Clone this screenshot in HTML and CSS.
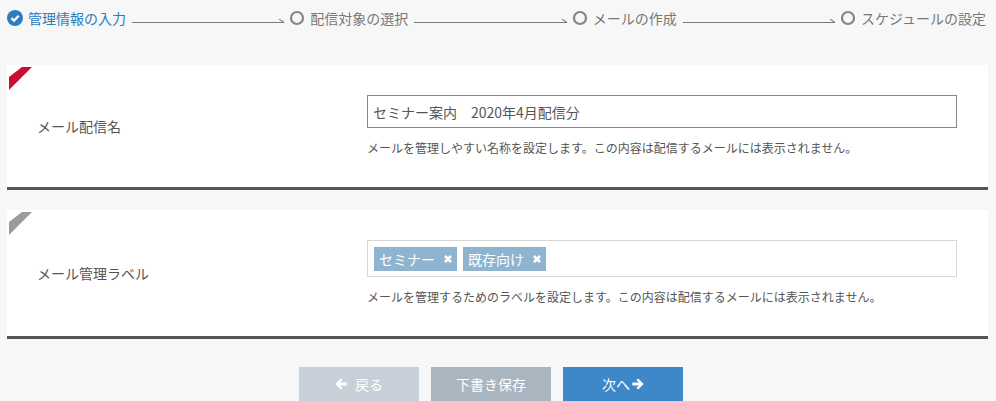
FILE: index.html
```html
<!DOCTYPE html>
<html lang="ja">
<head>
  <meta charset="UTF-8">
  <meta name="viewport" content="width=device-width, initial-scale=1.0">
  <title>メール配信 - 管理情報の入力</title>
  <link rel="stylesheet" href="styles.css">
</head>
<body>
  <div class="steps">
    <div class="step active">
      <svg class="step-icon" viewBox="0 0 16 16"><circle cx="8" cy="8" r="8" fill="#2f7bbf"/><path d="M4.4 8.2 L7 10.7 L11.7 5.7" fill="none" stroke="#fff" stroke-width="2.3"/></svg>
      <span>管理情報の入力</span>
    </div>
    <div class="step-line"></div>
    <div class="step">
      <svg class="step-icon" viewBox="0 0 16 16"><circle cx="8" cy="8" r="6" fill="none" stroke="#858585" stroke-width="2.2"/></svg>
      <span>配信対象の選択</span>
    </div>
    <div class="step-line"></div>
    <div class="step">
      <svg class="step-icon" viewBox="0 0 16 16"><circle cx="8" cy="8" r="6" fill="none" stroke="#858585" stroke-width="2.2"/></svg>
      <span>メールの作成</span>
    </div>
    <div class="step-line"></div>
    <div class="step">
      <svg class="step-icon" viewBox="0 0 16 16"><circle cx="8" cy="8" r="6" fill="none" stroke="#858585" stroke-width="2.2"/></svg>
      <span>スケジュールの設定</span>
    </div>
  </div>

  <div class="card">
    <svg class="ribbon" viewBox="0 0 28 28"><polygon points="15,2 25,2 2,25 2,12" fill="#c8102e"/></svg>
    <div class="card-label">メール配信名</div>
    <div class="card-body">
      <input class="text-input" type="text" value="セミナー案内　2020年4月配信分">
      <p class="help">メールを管理しやすい名称を設定します。この内容は配信するメールには表示されません。</p>
    </div>
  </div>

  <div class="card">
    <svg class="ribbon" viewBox="0 0 28 28"><polygon points="15,2 25,2 2,25 2,12" fill="#9b9b9b"/></svg>
    <div class="card-label">メール管理ラベル</div>
    <div class="card-body">
      <div class="tag-box">
        <span class="tag">セミナー<svg class="tag-close" viewBox="0 0 8 8"><path d="M1 1 L7 7 M7 1 L1 7" stroke="#fff" stroke-width="2.6"/></svg></span>
        <span class="tag">既存向け<svg class="tag-close" viewBox="0 0 8 8"><path d="M1 1 L7 7 M7 1 L1 7" stroke="#fff" stroke-width="2.6"/></svg></span>
      </div>
      <p class="help">メールを管理するためのラベルを設定します。この内容は配信するメールには表示されません。</p>
    </div>
  </div>

  <div class="actions">
    <button class="btn btn-back">
      <svg class="btn-icon" viewBox="0 0 12 12"><path d="M5.8 0.4 L0.3 6 L5.8 11.6 L7.6 9.8 L5.1 7.4 H11.7 V4.6 H5.1 L7.6 2.2 Z" fill="#fff"/></svg>
      <span>戻る</span>
    </button>
    <button class="btn btn-draft">下書き保存</button>
    <button class="btn btn-next">
      <span>次へ</span>
      <svg class="btn-icon" viewBox="0 0 12 12"><path d="M6.2 0.4 L11.7 6 L6.2 11.6 L4.4 9.8 L6.9 7.4 H0.3 V4.6 H6.9 L4.4 2.2 Z" fill="#fff"/></svg>
    </button>
  </div>
</body>
</html>
```

FILE: styles.css
```css
body {
  margin: 0;
  background-color: #f7f7f7;
  font-family: "Noto Sans CJK JP", "Noto Sans", sans-serif;
  color: #555;
}
.steps {
  display: flex;
  align-items: center;
  height: 36px;
  padding: 0 10px 0 7px;
  font-size: 14px;
  line-height: 20px;
}
.step {
  display: flex;
  align-items: center;
  color: #777;
  white-space: nowrap;
}
.step.active {
  color: #2f7bbf;
}
.step-icon {
  width: 16px;
  height: 16px;
  margin-right: 5px;
}
.step-line {
  flex: 1;
  height: 1px;
  background-color: #7a7a7a;
  margin: 9px 5px 0 6px;
  position: relative;
}
.step-line::after {
  content: "";
  position: absolute;
  right: 0;
  top: 0;
  width: 6px;
  height: 1px;
  background-color: #7a7a7a;
  transform-origin: right center;
  transform: rotate(35deg);
}
.card {
  position: relative;
  display: flex;
  align-items: center;
  background-color: #fff;
  margin: 29px 8px 20px 7px;
  padding: 30px 31px 30px 30px;
  border-bottom: 3px solid #555;
}
.card + .card {
  margin-top: 0;
}
.ribbon {
  position: absolute;
  top: 0;
  left: 0;
  width: 28px;
  height: 28px;
}
.card-label {
  width: 330px;
  flex-shrink: 0;
  font-size: 14px;
  line-height: 20px;
}
.card-body {
  flex: 1;
}
.text-input {
  display: block;
  width: 100%;
  height: 33px;
  box-sizing: border-box;
  margin: 0;
  padding: 0 5px;
  border: 1px solid #888;
  border-radius: 0;
  font-family: inherit;
  font-size: 14px;
  color: #555;
  background-color: #fff;
  outline: none;
}
.help {
  margin: 11px 0 0;
  font-size: 12px;
  line-height: 18px;
  color: #555;
}
.tag-box {
  display: flex;
  gap: 6px;
  height: 37px;
  box-sizing: border-box;
  padding: 6px;
  border: 1px solid #d6d6d6;
}
.tag {
  display: flex;
  align-items: center;
  height: 24px;
  padding: 0 5px;
  background-color: #8fb4cf;
  color: #fff;
  font-size: 14px;
  line-height: 24px;
}
.tag-close {
  width: 8px;
  height: 8px;
  margin-left: 9px;
}
.actions {
  display: flex;
  justify-content: center;
  gap: 12px;
  margin-top: 28px;
  padding-right: 14px;
}
.btn {
  display: flex;
  align-items: center;
  justify-content: center;
  gap: 8px;
  width: 120px;
  height: 36px;
  padding: 0 0 2px;
  border: none;
  border-radius: 0;
  color: #fff;
  font-family: inherit;
  font-size: 14px;
  cursor: pointer;
}
.btn-icon {
  width: 12px;
  height: 12px;
}
.btn-back {
  background-color: #c7d0d8;
}
.btn-draft {
  background-color: #a9b5bf;
}
.btn-next {
  background-color: #3e88c9;
  gap: 2px;
}
```
